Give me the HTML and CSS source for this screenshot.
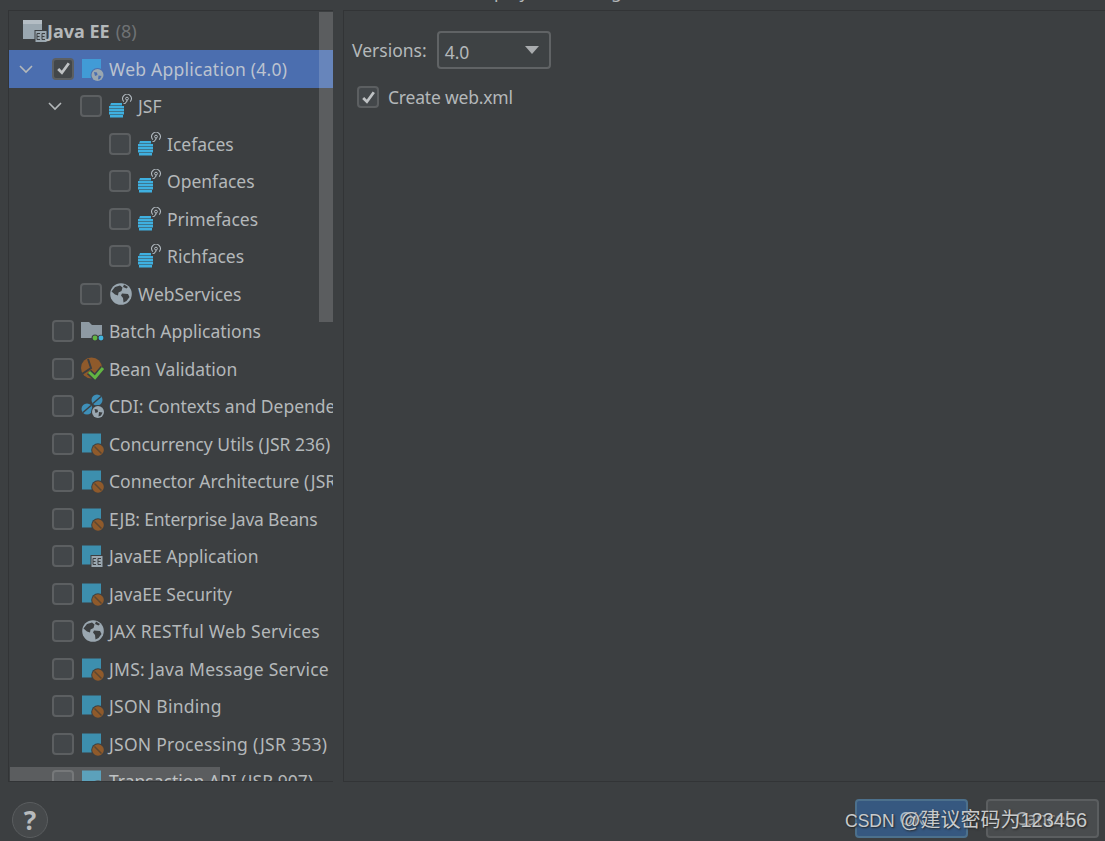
FILE: index.html
```html
<!DOCTYPE html>
<html lang="en">
<head>
  <meta charset="UTF-8">
  <meta name="viewport" content="width=device-width, initial-scale=1.0">
  <title>New Project - Java EE</title>
  <link rel="stylesheet" href="styles.css">
</head>
<body>

  <!-- Icon sprites -->
  <svg class="sprites" width="0" height="0">
    <symbol id="badge-ee" viewBox="0 0 24 24">
      <rect x="9.500" y="11" width="13" height="13" fill="#3c3f41"/>
      <rect x="10.500" y="12" width="11" height="11" fill="#9aa7b0"/>
      <path d="M15 14.500h-3v6h3M12 17.500h2.500M20 14.500h-3v6h3M17 17.500h2.500" stroke="#3c3f41" stroke-width="1" fill="none"/>
    </symbol>
    <symbol id="bean" viewBox="0 0 24 24">
      <circle cx="17" cy="18" r="6.800" fill="#3c3f41"/>
      <circle cx="17" cy="18" r="5.800" fill="#8f5a2b"/>
      <path d="M13.500 14.500L20.500 21.500" stroke="#5a4632" stroke-width="1.500"/>
    </symbol>
    <symbol id="globe" viewBox="0 0 24 24">
      <circle cx="12" cy="12" r="10.800" fill="#9aa7b0"/>
      <path d="M6 5l5-1.500 2.500 2-1 3.500-3 1.500-.5 3-3-1-3.500-3zM13 11.500l6 .5 1.500 3-3 4-3 1.500-.5-4.500-2-2.500zM15 2.500l4 2.500-1.500 1.500-3.500-1.500z" fill="#3c3f41"/>
    </symbol>
    <symbol id="jsf" viewBox="0 0 24 24">
      <path d="M2 9h11v2.400H1zM0 12h15v2.400H0zM0 15h15v2.400H0zM0 18h15v2.400H0zM1 21h13v2.400H1z" fill="#3fb0e0"/>
      <path d="M14.500 9.500h1.500l2-2.500V6" stroke="#a8b1b8" stroke-width="1.100" fill="none"/>
      <circle cx="18" cy="4.600" r="1.400" fill="none" stroke="#b4bcc2" stroke-width="1"/>
      <path d="M14.800 7.600a4.500 4.300 0 1 1 6.400 0" stroke="#b4bcc2" stroke-width="1.100" fill="none"/>
    </symbol>
    <symbol id="folder" viewBox="0 0 24 24">
      <path d="M0 3h8l3 3h10v13H0z" fill="#8e9aa3"/>
      <circle cx="14" cy="19" r="3.500" fill="#3c3f41"/>
      <circle cx="20" cy="19" r="3.300" fill="#3c3f41"/>
      <circle cx="14" cy="19" r="2.400" fill="#62b543"/>
      <circle cx="20" cy="19" r="2.400" fill="#40b6e0"/>
    </symbol>
    <symbol id="validation" viewBox="0 0 24 24">
      <circle cx="10.500" cy="11" r="10.500" fill="#8f5a2b"/>
      <path d="M1 17l9-6-3-9" stroke="#3c3f41" stroke-width="2" fill="none"/>
      <path d="M8 15l6 5.500L22 11" stroke="#3c3f41" stroke-width="6" fill="none"/>
      <path d="M8 15l6 5.500L22 11" stroke="#62b543" stroke-width="3" fill="none"/>
    </symbol>
    <symbol id="cdi" viewBox="0 0 24 24">
      <circle cx="16" cy="6" r="5.500" fill="#3e8fb8"/>
      <circle cx="6" cy="15" r="5.500" fill="#3e8fb8"/>
      <path d="M12 9.500l8-7M2 18.500l8-7" stroke="#3c3f41" stroke-width="1.400"/>
      <circle cx="17" cy="18" r="7" fill="#3c3f41"/>
      <circle cx="17" cy="18" r="6" fill="#9aa7b0"/>
      <path d="M13.500 15l3 .5.500 2.500-2.500 1zM18 18l3.500.5-1.500 3-2.500 1z" fill="#3c3f41"/>
    </symbol>
    <symbol id="module" viewBox="0 0 24 24">
      <path d="M1 1.500h19v19H1z" fill="#3d8fae"/>
    </symbol>
  </svg>

  <div class="title-strip"><span>web module deployment using</span></div>

  <div class="main">
    <!-- Framework tree -->
    <div class="tree">
      <div class="tree-head">
        <svg class="head-icon" viewBox="0 0 24 24">
          <path d="M0 1h19v19H0z" fill="#9aa7b0"/>
          <path d="M0 1h19v4H0z" fill="#b4bdc4"/>
          <use href="#badge-ee" x="2" y="0"/>
        </svg>
        <b>Java EE</b><span class="count">(8)</span>
      </div>

      <div class="row selected">
        <span class="arrow"><svg viewBox="0 0 16 16"><path d="M2 5l6 6 6-6"/></svg></span>
        <span class="check on"><svg viewBox="0 0 16 16"><path d="M3 8.500l3.500 3.500L13 3"/></svg></span>
        <svg class="icon" viewBox="0 0 24 24">
          <path d="M1 2h19v19H1z" fill="#419bd6"/>
          <circle cx="16.500" cy="18" r="7" fill="#4b6eaf"/>
          <circle cx="16.500" cy="18" r="6" fill="#9aa7b0"/>
          <path d="M13 15l3 .5.500 2.500-2.500 1zM17.500 18.500l3 .5-1.500 3-2 .5z" fill="#4b6eaf"/>
        </svg>
        <span class="label">Web Application (4.0)</span>
      </div>
      <div class="row lvl1">
        <span class="arrow"><svg viewBox="0 0 16 16"><path d="M2 5l6 6 6-6"/></svg></span>
        <span class="check"></span>
        <svg class="icon"><use href="#jsf"/></svg>
        <span class="label">JSF</span>
      </div>
      <div class="row lvl2"><span class="check"></span><svg class="icon"><use href="#jsf"/></svg><span class="label">Icefaces</span></div>
      <div class="row lvl2"><span class="check"></span><svg class="icon"><use href="#jsf"/></svg><span class="label">Openfaces</span></div>
      <div class="row lvl2"><span class="check"></span><svg class="icon"><use href="#jsf"/></svg><span class="label">Primefaces</span></div>
      <div class="row lvl2"><span class="check"></span><svg class="icon"><use href="#jsf"/></svg><span class="label">Richfaces</span></div>
      <div class="row lvl1 no-arrow"><span class="check"></span><svg class="icon"><use href="#globe"/></svg><span class="label">WebServices</span></div>
      <div class="row no-arrow"><span class="check"></span><svg class="icon"><use href="#folder"/></svg><span class="label">Batch Applications</span></div>
      <div class="row no-arrow"><span class="check"></span><svg class="icon"><use href="#validation"/></svg><span class="label">Bean Validation</span></div>
      <div class="row no-arrow"><span class="check"></span><svg class="icon"><use href="#cdi"/></svg><span class="label">CDI: Contexts and Dependency Injection</span></div>
      <div class="row no-arrow"><span class="check"></span><svg class="icon"><use href="#module"/><use href="#bean"/></svg><span class="label">Concurrency Utils (JSR 236)</span></div>
      <div class="row no-arrow"><span class="check"></span><svg class="icon"><use href="#module"/><use href="#bean"/></svg><span class="label">Connector Architecture (JSR 322)</span></div>
      <div class="row no-arrow"><span class="check"></span><svg class="icon"><use href="#module"/><use href="#bean"/></svg><span class="label tight">EJB: Enterprise Java Beans</span></div>
      <div class="row no-arrow"><span class="check"></span><svg class="icon"><use href="#module"/><use href="#badge-ee"/></svg><span class="label">JavaEE Application</span></div>
      <div class="row no-arrow"><span class="check"></span><svg class="icon"><use href="#module"/><use href="#bean"/></svg><span class="label">JavaEE Security</span></div>
      <div class="row no-arrow"><span class="check"></span><svg class="icon"><use href="#globe"/></svg><span class="label wide">JAX RESTful Web Services</span></div>
      <div class="row no-arrow"><span class="check"></span><svg class="icon"><use href="#module"/><use href="#bean"/></svg><span class="label wide">JMS: Java Message Service</span></div>
      <div class="row no-arrow"><span class="check"></span><svg class="icon"><use href="#module"/><use href="#bean"/></svg><span class="label wide">JSON Binding</span></div>
      <div class="row no-arrow"><span class="check"></span><svg class="icon"><use href="#module"/><use href="#bean"/></svg><span class="label wide">JSON Processing (JSR 353)</span></div>
      <div class="row no-arrow"><span class="check"></span><svg class="icon"><use href="#module"/><use href="#bean"/></svg><span class="label">Transaction API (JSR 907)</span></div>

      <div class="scroll-v"></div>
      <div class="scroll-h"></div>
    </div>

    <!-- Options for the selected framework -->
    <div class="options">
      <div class="version-line">
        <span class="label">Versions:</span>
        <div class="combo">
          <span>4.0</span>
          <span class="combo-arrow"></span>
        </div>
      </div>
      <div class="create-line">
        <span class="check on"><svg viewBox="0 0 16 16"><path d="M3 8.500l3.500 3.500L13 3"/></svg></span>
        <span class="label tight">Create web.xml</span>
      </div>
    </div>
  </div>

  <div class="footer">
    <div class="help">?</div>
    <div class="buttons">
      <div class="btn primary">OK</div>
      <div class="btn">Cancel</div>
    </div>
    <div class="watermark"><span class="watermark-site">CSDN</span> @建议密码为123456</div>
  </div>

</body>
</html>
```

FILE: styles.css
```css
body {
  margin: 0;
  width: 1105px;
  height: 841px;
  overflow: hidden;
  background-color: #3c3f41;
  color: #b4b8ba;
  font-family: "Noto Sans", "Noto Sans CJK SC", sans-serif;
  font-size: 17.5px;
  display: flex;
  flex-direction: column;
}

.sprites {
  position: absolute;
}

/* Heading cut off by the top of the window */
.title-strip {
  height: 10px;
  overflow: hidden;
  display: flex;
  align-items: flex-end;
  padding-left: 367px;
  line-height: 24px;
  white-space: nowrap;
  flex: none;
}

.title-strip span {
  margin-bottom: 7px;
}

.main {
  display: flex;
  gap: 10px;
  height: 772px;
  padding-left: 8px;
  flex: none;
}

/* Tree */
.tree {
  position: relative;
  width: 325px;
  box-sizing: border-box;
  border: 1px solid #323436;
  border-right: none;
  overflow: hidden;
  flex: none;
}

.tree-head {
  height: 39px;
  padding-left: 14px;
  padding-top: 1px;
  display: flex;
  align-items: center;
  box-sizing: border-box;
  font-size: 18px;
}

.head-icon {
  width: 24px;
  height: 24px;
  flex: none;
}

.tree-head b {
  font-weight: 700;
}

.count {
  margin-left: 6px;
  color: #6f7274;
}

.row {
  height: 37.5px;
  display: flex;
  align-items: center;
  white-space: nowrap;
  padding-left: 9px;
}

.row.no-arrow {
  padding-left: 43px;
}

.row.lvl1 {
  padding-left: 38px;
}

.row.lvl1.no-arrow {
  padding-left: 71px;
}

.row.lvl2 {
  padding-left: 100px;
}

.row.selected {
  background-color: #4b6eaf;
}

.row.selected .label {
  color: #bcc3cf;
  letter-spacing: 0.25px;
}

.lvl1 .label,
.lvl2 .label {
  margin-left: 1px;
}

.wide {
  letter-spacing: 0.27px;
}

.tight {
  letter-spacing: -0.2px;
}

.arrow {
  width: 16px;
  height: 16px;
  margin-right: 18px;
  flex: none;
}

.lvl1 .arrow {
  margin-right: 17px;
}

.arrow svg {
  display: block;
  width: 16px;
  height: 16px;
  fill: none;
  stroke: #b4b8ba;
  stroke-width: 1.6;
}

.check {
  width: 22px;
  height: 22px;
  box-sizing: border-box;
  border: 2px solid #5c5f61;
  border-radius: 4px;
  background-color: #43474a;
  flex: none;
  display: flex;
  align-items: center;
  justify-content: center;
}

.check svg {
  width: 17px;
  height: 17px;
  fill: none;
  stroke: #bfc2c4;
  stroke-width: 2.6;
}

.icon {
  width: 24px;
  height: 24px;
  margin-left: 7px;
  margin-right: 4px;
  flex: none;
}

.scroll-v {
  position: absolute;
  top: 1px;
  right: 0;
  width: 14px;
  height: 310px;
  background-color: rgba(255, 255, 255, 0.16);
}

.scroll-h {
  position: absolute;
  left: 1px;
  bottom: 0;
  width: 210px;
  height: 14px;
  background-color: rgba(255, 255, 255, 0.16);
}

/* Options */
.options {
  flex: 1;
  border: 1px solid #323436;
  border-right: none;
  padding: 20px 0 0 8px;
}

.version-line {
  display: flex;
  align-items: center;
  gap: 10px;
}

.combo {
  width: 114px;
  height: 38px;
  box-sizing: border-box;
  border: 2px solid #606365;
  border-radius: 4px;
  background-color: #3e4244;
  display: flex;
  align-items: center;
  justify-content: space-between;
  padding: 4px 10px 0 6px;
}

.combo-arrow {
  width: 0;
  height: 0;
  margin-top: -4px;
  border-left: 7px solid transparent;
  border-right: 7px solid transparent;
  border-top: 8px solid #a9acae;
}

.create-line {
  display: flex;
  align-items: center;
  gap: 9px;
  padding: 16px 0 0 5px;
}

/* Footer */
.footer {
  position: relative;
  flex: 1;
  display: flex;
  justify-content: space-between;
  padding: 17px 6px 0 12px;
}

.help {
  width: 36px;
  height: 36px;
  box-sizing: border-box;
  border: 1px solid #5a5d5f;
  border-radius: 50%;
  background-color: #46494b;
  color: #b8bbbd;
  font-size: 26px;
  font-weight: 700;
  line-height: 34px;
  text-align: center;
  margin-top: 3px;
}

.buttons {
  display: flex;
  gap: 18px;
}

.btn {
  width: 113px;
  height: 39px;
  box-sizing: border-box;
  border: 2px solid #5b5e60;
  border-radius: 4px;
  background-color: #494c4e;
  text-align: center;
  line-height: 34px;
  color: #a8abad;
}

.btn.primary {
  background-color: #365880;
  border-color: #4c708c;
  color: #a8b6c4;
}

.watermark {
  position: absolute;
  top: 22px;
  left: 845px;
  font-family: "Liberation Sans", "Noto Sans CJK SC", sans-serif;
  font-size: 20px;
  color: #c9cbcc;
  text-shadow: 1px 1px 2px #222;
  white-space: nowrap;
}

.watermark-site {
  font-size: 17.5px;
}
```
